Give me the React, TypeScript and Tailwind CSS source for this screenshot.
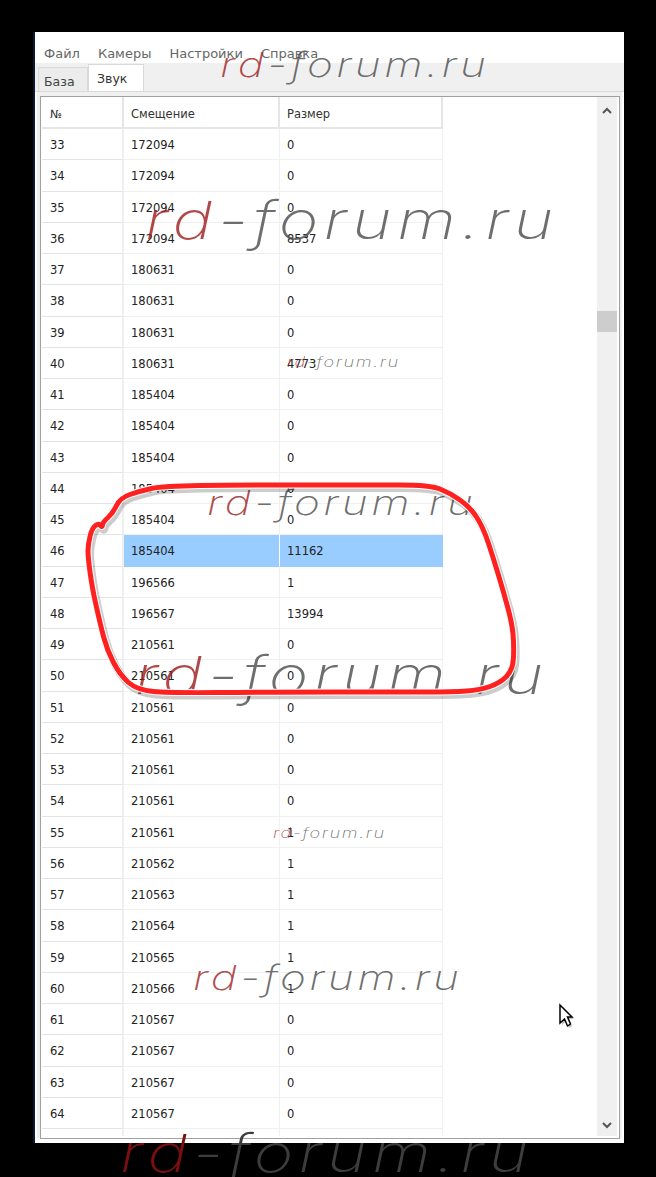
const rows: [number, string, string][] = [
  [33, '172094', '0'], [34, '172094', '0'], [35, '172094', '0'], [36, '172094', '8537'],
  [37, '180631', '0'], [38, '180631', '0'], [39, '180631', '0'], [40, '180631', '4773'],
  [41, '185404', '0'], [42, '185404', '0'], [43, '185404', '0'], [44, '185404', '0'],
  [45, '185404', '0'], [46, '185404', '11162'], [47, '196566', '1'], [48, '196567', '13994'],
  [49, '210561', '0'], [50, '210561', '0'], [51, '210561', '0'], [52, '210561', '0'],
  [53, '210561', '0'], [54, '210561', '0'], [55, '210561', '1'], [56, '210562', '1'],
  [57, '210563', '1'], [58, '210564', '1'], [59, '210565', '1'], [60, '210566', '1'],
  [61, '210567', '0'], [62, '210567', '0'], [63, '210567', '0'], [64, '210567', '0'],
];

// x, y, font size, tracking of each stamped watermark
const marks = [
  { left: 220, top: 48, size: 34, spacing: 2.6 },
  { left: 145, top: 195, size: 52, spacing: 4.1 },
  { left: 287, top: 355, size: 14, spacing: 1.2 },
  { left: 207, top: 486, size: 34, spacing: 2.6 },
  { left: 135, top: 650, size: 52, spacing: 4.1 },
  { left: 273, top: 826, size: 14, spacing: 1.2 },
  { left: 193, top: 961, size: 34, spacing: 2.6 },
];

const Mark = ({ left, top, size, spacing }: { left: number; top: number; size: number; spacing: number }) => (
  <div
    className="absolute origin-left scale-x-[1.3] italic font-extralight whitespace-nowrap leading-none font-['Inter',sans-serif] text-[#555]/85"
    style={{ left, top, fontSize: size, letterSpacing: spacing }}
  >
    <span className="text-[#9c1a1a]/80">rd</span>-forum.ru
  </div>
);

const Row = ({ row }: { row: [number, string, string] }) => {
  const active = row[0] === 46;
  return (
    <div className="flex h-[31.26px] shrink-0">
      <div className="w-[82px] pl-[8px] pt-[3px] flex items-center border-b border-r-2 border-b-[#e3e3e3] border-r-[#efefef]">{row[0]}</div>
      <div className={`w-[156px] pl-[7px] pt-[3px] flex items-center border-b border-r ${active ? 'bg-[#99ccff] border-b-[#99ccff] border-r-white' : 'border-b-[#f0f0f0] border-r-[#f0f0f0]'}`}>{row[1]}</div>
      <div className={`w-[163px] pl-[7px] pt-[3px] flex items-center border-b border-r ${active ? 'bg-[#99ccff] border-b-[#99ccff] border-r-[#99ccff]' : 'border-b-[#f0f0f0] border-r-[#f0f0f0]'}`}>{row[2]}</div>
    </div>
  );
};

// traced from the reference, rounded off through the midpoints
const ringPoints = [
  [92, 528], [88, 545], [88, 557], [92, 587], [100, 623], [107, 650], [120, 675], [137, 690],
  [170, 693], [270, 692], [403, 692], [453, 692], [480, 690], [500, 683], [513, 670], [514, 645],
  [512, 623], [503, 590], [493, 557], [483, 527], [470, 507], [450, 493], [430, 485], [370, 485],
  [237, 485], [163, 486], [140, 491], [120, 498], [113, 513], [103, 522], [102, 528], [99, 523],
];

const outline =
  ringPoints
    .map((p, i) => {
      const next = ringPoints[(i + 1) % ringPoints.length];
      const mid = `${(p[0] + next[0]) / 2} ${(p[1] + next[1]) / 2}`;
      return i === 0 ? `M${mid}` : `Q${p[0]} ${p[1]} ${mid}`;
    })
    .join(' ') +
  ` Q${ringPoints[0][0]} ${ringPoints[0][1]} ${(ringPoints[0][0] + ringPoints[1][0]) / 2} ${(ringPoints[0][1] + ringPoints[1][1]) / 2}`;

export default function App() {
  return (
    <div className="relative w-[656px] h-[1177px] overflow-hidden bg-black pt-[32px] pl-[33px] font-['DejaVu_Sans',sans-serif]">
      <div className="w-[591px] h-[1111px] border-l-2 border-l-[#0a1a33] bg-white flex flex-col">
        <div className="h-[31px] shrink-0 flex items-center pl-[9px] pt-[12px] gap-[18px] text-[13px] text-[#666]">
          <span>Файл</span>
          <span>Камеры</span>
          <span>Настройки</span>
          <span>Справка</span>
        </div>
        <div className="h-[29px] shrink-0 bg-[#f0f0f0] flex items-end pl-[3px] border-b border-b-[#d9d9d9] text-[12.5px]">
          <div className="w-[50px] h-[24px] bg-[#ececec] border border-b-0 border-[#d9d9d9] flex items-center pl-[5px] pt-[6px] text-[#444]">База</div>
          <div className="w-[56px] h-[27px] bg-white border border-b-0 border-[#d9d9d9] flex items-center pl-[8px] pt-[3px] text-[#333]">Звук</div>
        </div>
        <div className="flex-1 min-h-0 flex flex-col px-[2px] pb-[4px] bg-white">
          <div className="flex-1 min-h-0 bg-[#f0f0f0] pt-[4px]">
            <div className="h-full ml-[3px] mr-[2px] border border-[#a0a0a0] bg-white flex pl-[1px] pr-[2px] pb-[2px] overflow-hidden">
              <div className="w-[401px] shrink-0 overflow-hidden flex flex-col text-[11.5px] text-[#222]">
                <div className="flex h-[32px] shrink-0 text-[#333]">
                  <div className="w-[82px] pl-[8px] pt-[6px] flex items-center border-b-2 border-r-2 border-[#e6e6e6]">№</div>
                  <div className="w-[156px] pl-[7px] pt-[6px] flex items-center border-b-2 border-r-2 border-[#e6e6e6]">Смещение</div>
                  <div className="w-[163px] pl-[7px] pt-[6px] flex items-center border-b-2 border-r-2 border-[#e6e6e6]">Размер</div>
                </div>
                {rows.map((row) => (
                  <Row key={row[0]} row={row} />
                ))}
                <div className="flex flex-1 min-h-[10px]">
                  <div className="w-[82px] border-r-2 border-r-[#efefef]" />
                  <div className="w-[156px] border-r border-r-[#f0f0f0]" />
                  <div className="w-[163px] border-r border-r-[#f0f0f0]" />
                </div>
              </div>
              <div className="flex-1" />
              <div className="relative w-[20px] shrink-0 bg-[#f0f0f0] flex flex-col items-center justify-between pt-[10px] pb-[7px]">
                <svg width="10" height="7" viewBox="0 0 10 7" fill="none" stroke="#555" strokeWidth="2">
                  <path d="M1 6 L5 2 L9 6" />
                </svg>
                <div className="absolute left-0 top-[214px] w-[20px] h-[21px] bg-[#cdcdcd]" />
                <svg width="10" height="7" viewBox="0 0 10 7" fill="none" stroke="#555" strokeWidth="2">
                  <path d="M1 1 L5 5 L9 1" />
                </svg>
              </div>
            </div>
          </div>
        </div>
      </div>

      {marks.map((m) => (
        <Mark key={`${m.left}-${m.top}`} {...m} />
      ))}
      <div className="absolute left-[120px] top-[1128px] origin-left scale-x-[1.3] italic font-extralight whitespace-nowrap leading-none font-['Inter',sans-serif] text-[52px] tracking-[4.1px] text-[#3d3d3d]">
        <span className="text-[#7a0f0f]">rd</span>-forum.ru
      </div>

      {/* hand drawn ring round the selected row */}
      <svg className="absolute left-0 top-0" width="656" height="1177" fill="none" strokeLinejoin="round" strokeLinecap="round">
        <path d={outline} stroke="#000" strokeOpacity="0.2" strokeWidth="8" transform="translate(2 3)" />
        <path d={outline} stroke="#fff" strokeWidth="7" />
        <path d={outline} stroke="#ff2020" strokeWidth="5" />
      </svg>

      {/* mouse pointer */}
      <svg className="absolute left-[558px] top-[1002px]" width="18" height="28" viewBox="0 0 18 28">
        <path d="M3 4 L15 16 L10 16 L13 23 L10 25 L7 18 L3 22 Z" fill="#000" fillOpacity="0.25" transform="translate(1 1)" />
        <path d="M2 3 L14 15 L9.5 15 L12.5 22 L9.5 24 L6.5 17 L2 21 Z" fill="#fff" stroke="#000" strokeWidth="1.5" />
      </svg>
    </div>
  );
}
